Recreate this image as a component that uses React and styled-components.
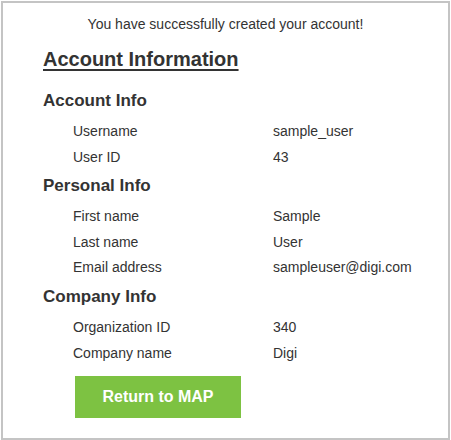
import React from "react";
import styled, { createGlobalStyle } from "styled-components";

const Global = createGlobalStyle`
  body {
    margin: 0;
    background: #fff;
    font-family: "Liberation Sans", Arial, sans-serif;
    color: #333;
  }
`;

const sections = [
  {
    title: "Account Info",
    rows: [
      ["Username", "sample_user"],
      ["User ID", "43"],
    ],
  },
  {
    title: "Personal Info",
    rows: [
      ["First name", "Sample"],
      ["Last name", "User"],
      ["Email address", "sampleuser@digi.com"],
    ],
  },
  {
    title: "Company Info",
    rows: [
      ["Organization ID", "340"],
      ["Company name", "Digi"],
    ],
  },
];

function App() {
  return (
    <>
      <Global />
      <Frame>
        <Notice>You have successfully created your account!</Notice>
        <Body>
          <Title>Account Information</Title>
          {sections.map((s) => (
            <Section key={s.title}>
              <SectionTitle>{s.title}</SectionTitle>
              {s.rows.map(([label, value]) => (
                <Row key={label}>
                  <Label>{label}</Label>
                  <Value>{value}</Value>
                </Row>
              ))}
            </Section>
          ))}
          <ReturnBtn>Return to MAP</ReturnBtn>
        </Body>
      </Frame>
    </>
  );
}

const Frame = styled.div`
  margin: 1px;
  width: 449px;
  height: 439px;
  box-sizing: border-box;
  border: 2px solid #c4c4c4;
  padding-top: 13px;
`;
const Notice = styled.div`
  font-size: 14px;
  line-height: 16px;
  text-align: center;
`;
const Body = styled.div`
  padding-left: 40px;
`;
const Title = styled.div`
  margin-top: 15px;
  margin-bottom: 14px;
  font-size: 20px;
  font-weight: bold;
  line-height: 24px;
  text-decoration: underline;
  text-decoration-thickness: 2px;
  text-underline-offset: 3px;
`;
const Section = styled.div`
  display: flex;
  flex-direction: column;
`;
const SectionTitle = styled.div`
  margin-top: 6px;
  margin-bottom: 8px;
  font-size: 17px;
  font-weight: bold;
  line-height: 20px;
`;
const Row = styled.div`
  display: flex;
  padding-left: 30px;
  font-size: 14px;
  line-height: 25.6px;
`;
const Label = styled.div`
  width: 200px;
`;
const Value = styled.div``;
const ReturnBtn = styled.div`
  margin: 10px 0 0 32px;
  width: 166px;
  height: 42px;
  background: #7dc242;
  color: #fff;
  font-size: 16px;
  font-weight: bold;
  display: flex;
  align-items: center;
  justify-content: center;
  cursor: pointer;
`;

export default App;
